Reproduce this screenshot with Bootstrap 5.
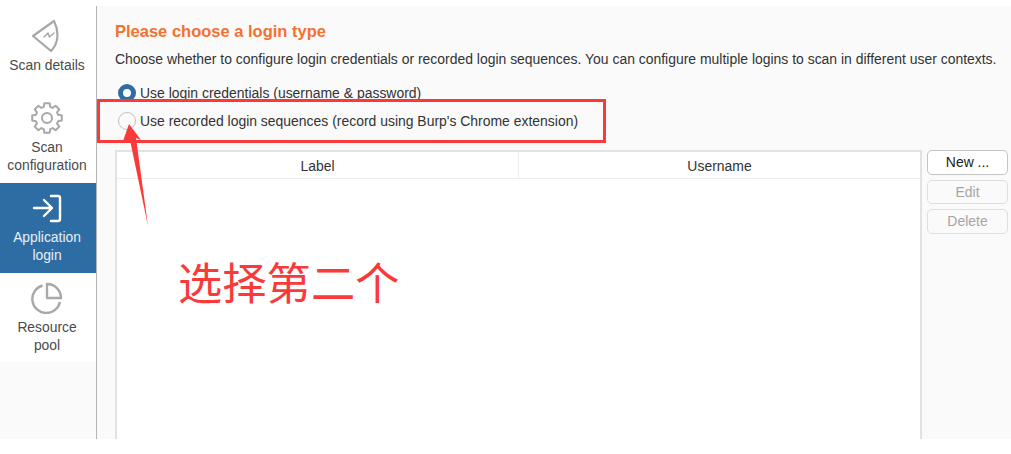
<!DOCTYPE html>
<html lang="en">
<head>
<meta charset="UTF-8">
<title>Application login</title>
<link href="https://cdn.jsdelivr.net/npm/bootstrap@5.3.0/dist/css/bootstrap.min.css" rel="stylesheet">
<style>
    html, body { background: #fff; }
    body { font-family: "Liberation Sans", Arial, sans-serif; font-size: 13.95px; color: #333; margin: 0; height: 454px; overflow: hidden; }
    .app-frame { height: 439px; padding-top: 6px; position: relative; }
    .side-rail { width: 97px; flex: none; border-right: 1px solid #b4b4b4; background: #fafafa; }
    .rail-item { background: #fff; color: #4a4a4a; text-align: center; line-height: 18px; font-size: 13.85px; padding-right: 2px; }
    .rail-item svg { display: block; margin: 0 auto; }
    .rail-item span { display: block; margin-top: 4px; }
    .rail-details { height: 84px; padding-top: 12px; }
    .rail-config { height: 93px; padding-top: 12px; }
    .rail-login { height: 90px; padding-top: 11px; background: #2e6da4; color: #e8f0f7; }
    .rail-pool { height: 89px; padding-top: 9px; }
    .main-pane { background: #fafafa; padding: 15px 2px 0 18px; min-width: 0; }
    .pane-title { color: #f4712f; font-size: 16.5px; font-weight: 700; line-height: 20px; margin: 0 0 9px; }
    .pane-text { font-size: 13.95px; line-height: 18px; margin: 0 0 11px; color: #333; white-space: nowrap; }
    .radio-line { height: 28px; padding-left: 3px; gap: 4px; line-height: 18px; white-space: nowrap; }
    .radio-dot { width: 18px; height: 18px; border-radius: 50%; flex: none; }
    .radio-on { border: 5px solid #2e6da4; background: #fff; }
    .radio-off { border: 1px solid #c2c2c2; background: #fafafa; }
    .list-row { margin-top: 15px; }
    .list-box { border: 2px solid #e2e2e2; border-bottom: 0; background: #fff; width: 807px; flex: none; }
    .list-head { height: 27px; border-bottom: 1px solid #ececec; color: #333; line-height: 28px; }
    .list-head > div { width: 401px; text-align: center; }
    .list-head > div + div { flex-grow: 1; border-left: 1px solid #ececec; }
    .side-btns { width: 81px; margin-left: 5px; gap: 5px; }
    .side-btns .btn { font-size: 13.95px; line-height: 18px; padding: 2px 0; height: 24.5px; border-radius: 5px; background: #fff; border: 1px solid #c4c4c4; color: #222; }
    .side-btns .btn:disabled { opacity: 1; color: #a5a5a5; border-color: #dedede; background: #fafafa; }
    .mark-box { position: absolute; left: 97px; top: 99px; width: 509px; height: 44px; border: 3px solid #fa3a3a; }
    .mark-arrow { position: absolute; left: 115px; top: 120px; }
    .mark-text { position: absolute; left: 178px; top: 256px; color: #fa3a3a; font-family: "Noto Sans CJK SC", sans-serif; font-size: 44.3px; line-height: 50px; white-space: nowrap; }
</style>
</head>
<body>

<div class="app-frame d-flex">
    <div class="side-rail">
        <div class="rail-item rail-details">
            <svg width="34" height="34" viewBox="0 0 34 34" fill="none" stroke="#a8a8a8" stroke-width="2.2" stroke-linejoin="round" stroke-linecap="round">
                <path d="M3 18 L24 3 C29 13 29 25 21 33 Z"/>
                <path d="M14 19 L18 15 L19.500 19 L24 15" stroke-width="1.500"/>
            </svg>
            <span>Scan details</span>
        </div>
        <div class="rail-item rail-config">
            <svg width="32" height="32" viewBox="0 0 32 32" fill="none" stroke="#a8a8a8" stroke-width="2" stroke-linejoin="round">
                <path d="M12.800 4.950 L13.400 1.200 H18.600 L19.200 4.950 L21.600 5.950 L24.600 3.700 L28.300 7.400 L26.050 10.400 L27.050 12.800 L30.800 13.400 V18.600 L27.050 19.200 L26.050 21.600 L28.300 24.600 L24.600 28.300 L21.600 26.050 L19.200 27.050 L18.600 30.800 H13.400 L12.800 27.050 L10.400 26.050 L7.400 28.300 L3.700 24.600 L5.950 21.600 L4.950 19.200 L1.200 18.600 V13.400 L4.950 12.800 L5.950 10.400 L3.700 7.400 L7.400 3.700 L10.400 5.950 Z"/>
                <circle cx="16" cy="16" r="5"/>
            </svg>
            <span>Scan<br>configuration</span>
        </div>
        <div class="rail-item rail-login">
            <svg width="30" height="30" viewBox="0 0 30 30" fill="none" stroke="#fff" stroke-width="2.400" stroke-linejoin="round" stroke-linecap="round">
                <path d="M2 14 H20 M12 6 L20 14 L12 22"/>
                <path d="M19 2 H26 Q28 2 28 4 V25 Q28 27 26 27 H19"/>
            </svg>
            <span>Application<br>login</span>
        </div>
        <div class="rail-item rail-pool">
            <svg width="32" height="32" viewBox="0 0 32 32" fill="none" stroke="#a8a8a8" stroke-width="2.400" stroke-linejoin="round">
                <path d="M11.500 3.500 A14 14 0 1 0 29 20"/>
                <path d="M16 2 A14 14 0 0 1 30 16 H16 Z"/>
            </svg>
            <span>Resource<br>pool</span>
        </div>
    </div>

    <div class="main-pane flex-grow-1 d-flex flex-column">
        <h1 class="pane-title">Please choose a login type</h1>
        <p class="pane-text">Choose whether to configure login credentials or recorded login sequences. You can configure multiple logins to scan in different user contexts.</p>
        <div class="radio-line d-flex align-items-center"><span class="radio-dot radio-on"></span><span>Use login credentials (username &amp; password)</span></div>
        <div class="radio-line d-flex align-items-center"><span class="radio-dot radio-off"></span><span>Use recorded login sequences (record using Burp's Chrome extension)</span></div>
        <div class="list-row d-flex flex-grow-1">
            <div class="list-box">
                <div class="list-head d-flex"><div>Label</div><div>Username</div></div>
            </div>
            <div class="side-btns d-flex flex-column">
                <button class="btn" type="button">New ...</button>
                <button class="btn" type="button" disabled>Edit</button>
                <button class="btn" type="button" disabled>Delete</button>
            </div>
        </div>
    </div>

    <div class="mark-box"></div>
    <svg class="mark-arrow" width="36" height="108" viewBox="0 0 36 108">
        <path d="M14 4 L26 20 L21 18 L33 106 L15 20 L8 21 Z" fill="#fa3a3a"/>
    </svg>
    <div class="mark-text">选择第二个</div>
</div>

<script src="https://cdn.jsdelivr.net/npm/bootstrap@5.3.0/dist/js/bootstrap.bundle.min.js"></script>
</body>
</html>
